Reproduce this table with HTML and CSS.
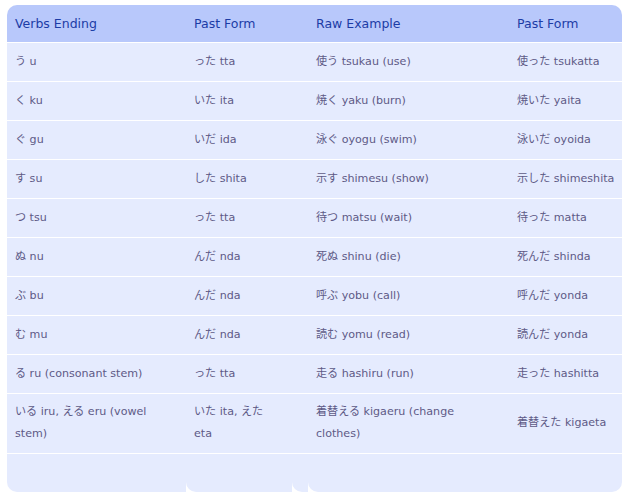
FILE: index.html
```html
<!DOCTYPE html>
<html>
<head>
<meta charset="utf-8">
<link rel="stylesheet" href="styles.css">
</head>
<body>
<table class="verbs">
  <colgroup>
    <col class="c1"><col class="c2"><col class="c3"><col class="c4">
  </colgroup>
  <thead>
    <tr><th class="tl">Verbs Ending</th><th>Past Form</th><th>Raw Example</th><th class="tr">Past Form</th></tr>
  </thead>
  <tbody>
    <tr><td>う u</td><td class="p2">った tta</td><td>使う tsukau (use)</td><td class="p4">使った tsukatta</td></tr>
    <tr><td>く ku</td><td class="p2">いた ita</td><td>焼く yaku (burn)</td><td class="p4">焼いた yaita</td></tr>
    <tr><td>ぐ gu</td><td class="p2">いだ ida</td><td>泳ぐ oyogu (swim)</td><td class="p4">泳いだ oyoida</td></tr>
    <tr><td>す su</td><td class="p2">した shita</td><td>示す shimesu (show)</td><td class="p4">示した shimeshita</td></tr>
    <tr><td>つ tsu</td><td class="p2">った tta</td><td>待つ matsu (wait)</td><td class="p4">待った matta</td></tr>
    <tr><td>ぬ nu</td><td class="p2">んだ nda</td><td>死ぬ shinu (die)</td><td class="p4">死んだ shinda</td></tr>
    <tr><td>ぶ bu</td><td class="p2">んだ nda</td><td>呼ぶ yobu (call)</td><td class="p4">呼んだ yonda</td></tr>
    <tr><td>む mu</td><td class="p2">んだ nda</td><td>読む yomu (read)</td><td class="p4">読んだ yonda</td></tr>
    <tr><td>る ru (consonant stem)</td><td class="p2">った tta</td><td>走る hashiru (run)</td><td class="p4">走った hashitta</td></tr>
    <tr><td class="dbl">いる iru, える eru (vowel stem)</td><td class="p2 dbl">いた ita, えた eta</td><td class="dbl">着替える kigaeru (change clothes)</td><td class="p4 dbl">着替えた kigaeta</td></tr>
    <tr class="foot"><td colspan="4"><div class="foot-row"><div class="fp f1"></div><div class="fp f2"></div><div class="fp f3"></div><div class="fp f4"></div></div></td></tr>
  </tbody>
</table>
</body>
</html>
```
FILE: styles.css
```css
html, body {
  margin: 0;
  padding: 0;
  background: #ffffff;
}
body {
  padding: 5px 0 0 7px;
  font-family: "DejaVu Sans", "Noto Sans CJK JP", sans-serif;
}
.verbs {
  border-collapse: collapse;
  border-spacing: 0;
  table-layout: fixed;
  width: 615px;
}
.c1 { width: 179px; }
.c2 { width: 122px; }
.c3 { width: 201px; }
.c4 { width: 113px; }
.verbs th {
  background: #b8c8fb;
  color: #1c3ca6;
  font-weight: normal;
  font-size: 12.5px;
  text-align: left;
  height: 37px;
  padding: 0 8px;
  border-bottom: 1px solid #ffffff;
  box-sizing: border-box;
}
.verbs th.tl { border-top-left-radius: 10px; }
.verbs th.tr { border-top-right-radius: 10px; }
.verbs td {
  background: #e5ebfe;
  color: #5e5a86;
  font-size: 11.1px;
  line-height: 22px;
  padding: 8px;
  border-bottom: 1px solid #ffffff;
  vertical-align: middle;
}
.verbs td.dbl { padding-top: 7px; }
.verbs td.p2 { padding-right: 24px; }
.verbs td.p4 { padding-right: 0; white-space: nowrap; }
.verbs tr.foot td {
  background: transparent;
  padding: 0;
  border-bottom: none;
}
.foot-row {
  display: flex;
  height: 38px;
}
.fp {
  background: #e5ebfe;
  border-bottom-left-radius: 10px;
}
.f1 { width: 179px; }
.f2 { width: 106px; }
.f3 { width: 16px; }
.f4 { flex: 1; border-bottom-right-radius: 10px; }
```
